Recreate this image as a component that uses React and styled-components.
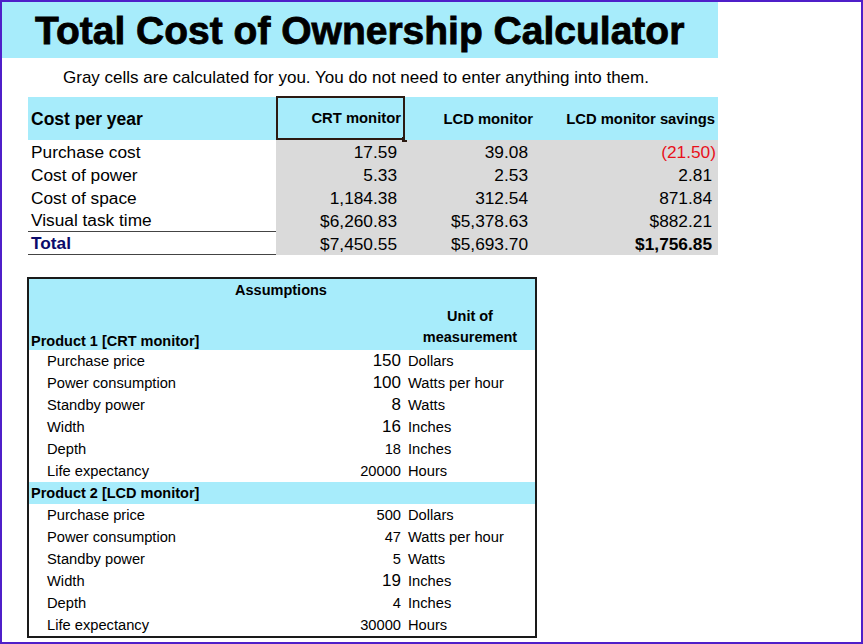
import React from "react";
import styled, { createGlobalStyle } from "styled-components";

const GlobalStyle = createGlobalStyle`
  html, body { margin: 0; padding: 0; background: #fff; }
  * { box-sizing: border-box; }
`;

const BLUE = "#a7ecfb";
const GRAY = "#dadada";

const Page = styled.div`
  width: 863px;
  height: 644px;
  border: 2px solid #4f1fc9;
  background: #fff;
  font-family: "Liberation Sans", Arial, sans-serif;
  color: #000;
  overflow: hidden;
`;

const TitleBand = styled.div`
  width: 716px;
  height: 56px;
  background: ${BLUE};
  display: flex;
  align-items: center;
  padding-left: 33px;
  padding-top: 2px;
`;

const Title = styled.h1`
  margin: 0;
  font-size: 39px;
  font-weight: 700;
  letter-spacing: 0;
  -webkit-text-stroke: 0.8px #000;
`;

const Subtitle = styled.p`
  margin: 10px 0 0 61px;
  font-size: 17px;
  line-height: 19px;
`;

const CostGrid = styled.div`
  margin: 10px 0 0 26px;
  width: 690px;
  display: grid;
  grid-template-columns: 248px 129px 135px 178px;
  grid-template-rows: 43px;
  grid-auto-rows: 23px;
`;

const HeadCell = styled.div`
  background: ${BLUE};
  display: flex;
  align-items: center;
  justify-content: ${(p) => (p.$left ? "flex-start" : "flex-end")};
  padding: ${(p) => (p.$left ? "2px 0 0 3px" : `0 ${p.$pad ?? 3}px 0 0`)};
  font-weight: 700;
  font-size: ${(p) => (p.$left ? "17.5px" : "14.8px")};
  position: relative;
  ${(p) =>
    p.$selected &&
    `
    border: 2px solid #2b1a12;
    padding-right: 2px;
    margin-top: -1px;
  `}
`;

const Handle = styled.span`
  position: absolute;
  right: -4px;
  bottom: -4px;
  width: 5px;
  height: 5px;
  background: #2b1a12;
`;

const LabelCell = styled.div`
  display: flex;
  align-items: center;
  padding: 1px 0 0 3px;
  font-size: 17.3px;
  border-bottom: ${(p) => (p.$rule ? "1px solid #444" : "none")};
  color: ${(p) => (p.$total ? "#0b0b6b" : "#000")};
  font-weight: ${(p) => (p.$total ? 700 : 400)};
`;

const ValueCell = styled.div`
  background: ${GRAY};
  display: flex;
  align-items: center;
  justify-content: flex-end;
  padding: 1px ${(p) => p.$pad || 8}px 0 0;
  font-size: 17.3px;
  color: ${(p) => (p.$neg ? "#e8101a" : "#000")};
  font-weight: ${(p) => (p.$bold ? 700 : 400)};
`;

const Box = styled.div`
  margin: 22px 0 0 25px;
  width: 510px;
  border: 2px solid #1a1a1a;
  display: grid;
  grid-template-columns: 300px 72px 134px;
  grid-template-rows: 22px 24px 25px;
  grid-auto-rows: 22px;
`;

const BoxTitle = styled.div`
  grid-column: 1 / -1;
  background: ${BLUE};
  text-align: center;
  font-weight: 700;
  font-size: 14.5px;
  line-height: 22px;
  padding-right: 2px;
`;

const ProductHead = styled.div`
  grid-column: ${(p) => (p.$span ? "1 / -1" : "1 / 3")};
  background: ${BLUE};
  display: flex;
  align-items: ${(p) => (p.$span ? "center" : "flex-end")};
  padding: 0 0 ${(p) => (p.$span ? 0 : 1)}px 2px;
  font-weight: 700;
  font-size: 14.5px;
  ${(p) => !p.$span && "grid-row: span 2;"}
`;

const UnitHead = styled.div`
  grid-row: span 2;
  background: ${BLUE};
  display: flex;
  flex-direction: column;
  justify-content: center;
  align-items: center;
  font-weight: 700;
  font-size: 14.5px;
  line-height: 21px;
  padding: 3px 0 0 4px;
`;

const AsLabel = styled.div`
  display: flex;
  align-items: center;
  padding-left: 18px;
  font-size: 14.7px;
`;

const AsValue = styled.div`
  display: flex;
  align-items: center;
  justify-content: flex-end;
  font-size: ${(p) => (p.$big ? "17px" : "14.7px")};
`;

const AsUnit = styled.div`
  display: flex;
  align-items: center;
  padding-left: 7px;
  font-size: 14.7px;
`;

const costRows = [
  ["Purchase cost", "17.59", "39.08", "(21.50)"],
  ["Cost of power", "5.33", "2.53", "2.81"],
  ["Cost of space", "1,184.38", "312.54", "871.84"],
  ["Visual task time", "$6,260.83", "$5,378.63", "$882.21"],
];

const product1 = [
  ["Purchase price", "150", "Dollars", true],
  ["Power consumption", "100", "Watts per hour", true],
  ["Standby power", "8", "Watts", true],
  ["Width", "16", "Inches", true],
  ["Depth", "18", "Inches", false],
  ["Life expectancy", "20000", "Hours", false],
];

const product2 = [
  ["Purchase price", "500", "Dollars", false],
  ["Power consumption", "47", "Watts per hour", false],
  ["Standby power", "5", "Watts", false],
  ["Width", "19", "Inches", true],
  ["Depth", "4", "Inches", false],
  ["Life expectancy", "30000", "Hours", false],
];

function AssumptionRows({ rows }) {
  return rows.map(([label, value, unit, big]) => (
    <React.Fragment key={label}>
      <AsLabel>{label}</AsLabel>
      <AsValue $big={big}>{value}</AsValue>
      <AsUnit>{unit}</AsUnit>
    </React.Fragment>
  ));
}

export default function App() {
  return (
    <Page>
      <GlobalStyle />
      <TitleBand>
        <Title>Total Cost of Ownership Calculator</Title>
      </TitleBand>
      <Subtitle>
        Gray cells are calculated for you. You do not need to enter anything
        into them.
      </Subtitle>

      <CostGrid>
        <HeadCell $left>Cost per year</HeadCell>
        <HeadCell $selected>
          CRT monitor
          <Handle />
        </HeadCell>
        <HeadCell $pad={7}>LCD monitor</HeadCell>
        <HeadCell>LCD monitor savings</HeadCell>
        {costRows.map(([label, crt, lcd, save], i) => (
          <React.Fragment key={label}>
            <LabelCell $rule={i === costRows.length - 1}>{label}</LabelCell>
            <ValueCell>{crt}</ValueCell>
            <ValueCell $pad={12}>{lcd}</ValueCell>
            <ValueCell $pad={i === 0 ? 2 : 6} $neg={i === 0}>
              {save}
            </ValueCell>
          </React.Fragment>
        ))}
        <LabelCell $rule $total>
          Total
        </LabelCell>
        <ValueCell>$7,450.55</ValueCell>
        <ValueCell $pad={12}>$5,693.70</ValueCell>
        <ValueCell $pad={6} $bold>
          $1,756.85
        </ValueCell>
      </CostGrid>

      <Box>
        <BoxTitle>Assumptions</BoxTitle>
        <ProductHead>Product 1 [CRT monitor]</ProductHead>
        <UnitHead>
          <span>Unit of</span>
          <span>measurement</span>
        </UnitHead>
        <AssumptionRows rows={product1} />
        <ProductHead $span>Product 2 [LCD monitor]</ProductHead>
        <AssumptionRows rows={product2} />
      </Box>
    </Page>
  );
}
